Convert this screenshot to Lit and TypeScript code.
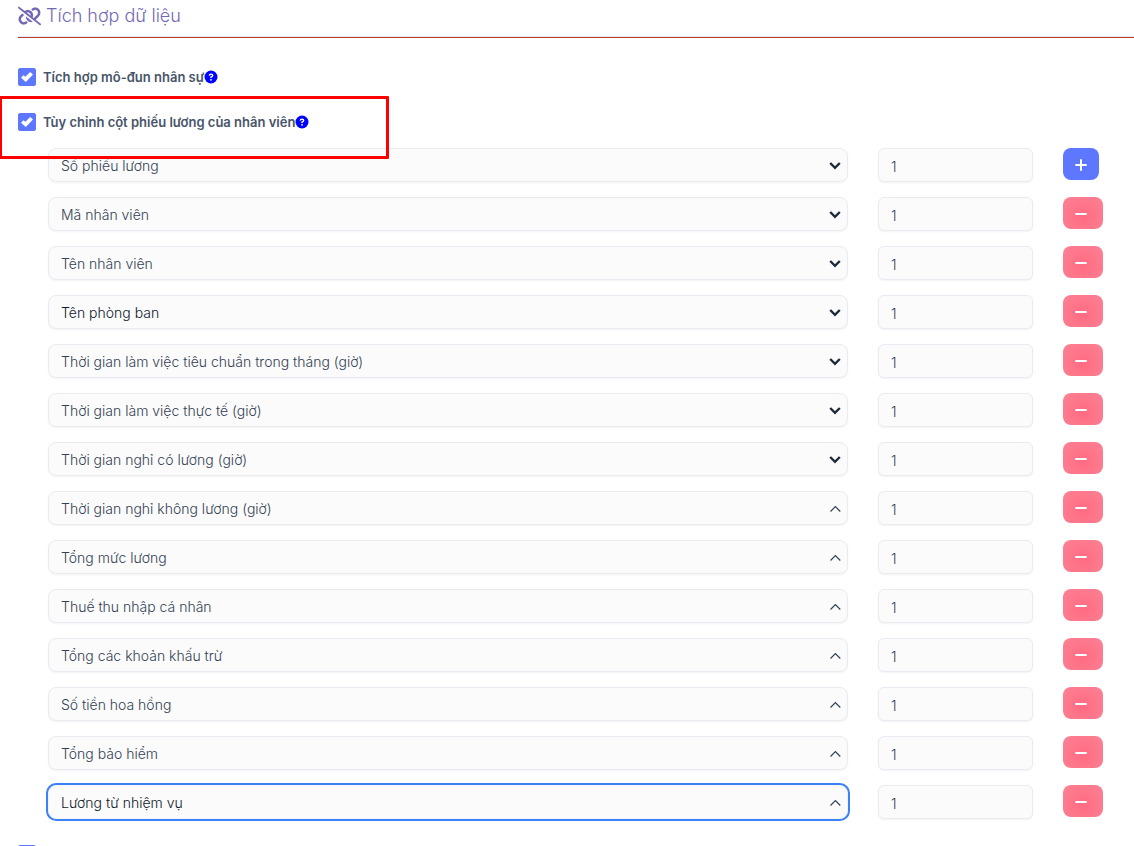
import { LitElement, html, css, svg } from "lit";
import { customElement, state } from "lit/decorators.js";

interface Column {
  name: string;
  order: number;
  chevron: "down" | "up";
  strong?: boolean;
}

const COLUMNS: Column[] = [
  { name: "Số phiếu lương", order: 1, chevron: "down" },
  { name: "Mã nhân viên", order: 1, chevron: "down" },
  { name: "Tên nhân viên", order: 1, chevron: "down" },
  { name: "Tên phòng ban", order: 1, chevron: "down", strong: true },
  { name: "Thời gian làm việc tiêu chuẩn trong tháng (giờ)", order: 1, chevron: "down" },
  { name: "Thời gian làm việc thực tế (giờ)", order: 1, chevron: "down" },
  { name: "Thời gian nghỉ có lương (giờ)", order: 1, chevron: "down" },
  { name: "Thời gian nghỉ không lương (giờ)", order: 1, chevron: "up" },
  { name: "Tổng mức lương", order: 1, chevron: "up" },
  { name: "Thuế thu nhập cá nhân", order: 1, chevron: "up" },
  { name: "Tổng các khoản khấu trừ", order: 1, chevron: "up" },
  { name: "Số tiền hoa hồng", order: 1, chevron: "up" },
  { name: "Tổng bảo hiểm", order: 1, chevron: "up" },
  { name: "Lương từ nhiệm vụ", order: 1, chevron: "up", strong: true },
];

@customElement("app-root")
export class AppRoot extends LitElement {
  @state() private active = COLUMNS.length - 1;

  static styles = css`
    :host {
      display: block;
      position: relative;
      height: 100vh;
      overflow: hidden;
      background: #fff;
      color: #475569;
      font-family: Inter, "Noto Sans", sans-serif;
      font-size: 14px;
      line-height: 20px;
    }
    *,
    *::before {
      box-sizing: border-box;
    }
    .page {
      padding-left: 18px;
    }
    .heading {
      display: flex;
      align-items: center;
      gap: 5px;
      height: 38px;
      margin: 0 0 30px;
      padding-bottom: 6px;
      border-bottom: 1px solid #c0392b;
      box-shadow: inset 0 -1px 0 #e8ecf2;
      color: #7367b5;
      font-size: 18px;
      font-weight: 300;
      line-height: 28px;
    }
    .heading svg {
      width: 23px;
      height: 20px;
      stroke: currentColor;
      stroke-width: 4;
    }
    .check {
      display: flex;
      align-items: center;
      height: 18px;
      margin-bottom: 27px;
      font-size: 13px;
      font-weight: 600;
    }
    .check label {
      padding-left: 7px;
    }
    .check input {
      appearance: none;
      display: grid;
      place-items: center;
      width: 18px;
      height: 18px;
      margin: 0;
      border: 1px solid #5d78ff;
      border-radius: 2px;
      background: #fff;
    }
    .check input:checked {
      background: #5d78ff;
    }
    .check input:checked::before {
      content: "";
      width: 12px;
      height: 10px;
      background: #fff;
      clip-path: polygon(0 58%, 20% 32%, 37% 48%, 76% 0, 100% 25%, 40% 100%);
    }
    .help {
      width: 14px;
      height: 14px;
    }
    .rows {
      display: grid;
      gap: 15px;
      margin: -10px 31px 0 30px;
    }
    .row {
      display: grid;
      grid-template-columns: 800fr 155fr 40px;
      column-gap: 30px;
      height: 34px;
    }
    .pick {
      display: grid;
      align-items: center;
    }
    .pick > * {
      grid-area: 1 / 1;
    }
    .pick svg {
      justify-self: end;
      width: 14px;
      height: 10px;
      margin-right: 6px;
      fill: none;
      pointer-events: none;
    }
    .field {
      width: 100%;
      height: 34px;
      margin: 0;
      padding: 2px 12px 0;
      border: 1px solid #e8ecf2;
      border-radius: 6px;
      background: #fbfbfb;
      box-shadow: 0 1px 2px rgba(0, 0, 0, 0.05);
      color: #334155;
      font: inherit;
      font-weight: 300;
      appearance: none;
      outline: none;
    }
    select.field {
      border-radius: 8px;
    }
    .field.strong {
      color: #0f172a;
    }
    .field.active {
      box-shadow: 0 0 0 2px #3b82f6;
      border-color: #f1f5f9;
    }
    .btn {
      display: grid;
      place-items: center;
      height: 32px;
      padding: 2px 0 0;
      border: 0;
      border-radius: 8px;
    }
    .add {
      width: 36px;
      background: #5d78ff;
    }
    .remove {
      width: 40px;
      padding-right: 4px;
      background: radial-gradient(circle at 50% 60%, #ff6b82, #fd8294);
    }
    .btn svg {
      width: 12px;
      height: 12px;
      stroke: #fff;
      stroke-width: 2;
      stroke-linecap: round;
    }
    .next {
      margin-top: 26px;
    }
    .callout {
      position: absolute;
      top: 96px;
      left: -1px;
      width: 390px;
      height: 63px;
      border: 3px solid #f00;
      border-radius: 1px;
      pointer-events: none;
    }
  `;

  private help() {
    return html`<svg class="help" viewBox="0 0 14 14" aria-hidden="true">
      <circle cx="7" cy="7" r="6.5" fill="#00f" />
      <path d="M5.3 5.6Q5.4 4.1 7 4.1Q8.7 4.1 8.7 5.5Q8.7 6.4 7 7.1V7.9" fill="none" stroke="#fff" stroke-width="1.4" />
      <circle cx="7" cy="9.8" r=".9" fill="#fff" />
    </svg>`;
  }

  private row(column: Column, index: number) {
    const chevron =
      column.chevron === "down"
        ? svg`<path d="M2.2 3l4.8 4.8L11.8 3" stroke="#1e293b" stroke-width="2.4" />`
        : svg`<path d="M2.5 8.5l4.9-4.9 4.9 4.9" stroke="#334155" stroke-width="1.2" />`;
    return html`<div class="row">
      <div class="pick">
        <select
          class="field ${column.strong ? "strong" : ""} ${index === this.active ? "active" : ""}"
          aria-label="Cột phiếu lương ${index + 1}"
          @focus=${() => (this.active = index)}
        >
          ${COLUMNS.map((c) => html`<option ?selected=${c === column}>${c.name}</option>`)}
        </select>
        <svg viewBox="0 0 14 10" aria-hidden="true">${chevron}</svg>
      </div>
      <input class="field" type="text" inputmode="numeric" aria-label="Thứ tự ${index + 1}" .value=${String(column.order)} />
      ${index === 0
        ? html`<button class="btn add" type="button" aria-label="Thêm">
            <svg viewBox="0 0 12 12"><path d="M1 6H11M6 1V11" /></svg>
          </button>`
        : html`<button class="btn remove" type="button" aria-label="Xóa">
            <svg viewBox="0 0 12 12"><path d="M1 6H11" /></svg>
          </button>`}
    </div>`;
  }

  render() {
    return html`<main class="page">
        <h2 class="heading">
          <svg viewBox="0 0 640 512" fill="currentColor" aria-hidden="true">
            <path
              d="M38.8 5.1C28.4-3.1 13.3-1.2 5.1 9.2S-1.2 34.7 9.2 42.9l592 464c10.4 8.2 25.5 6.3 33.7-4.1s6.3-25.5-4.1-33.7L489.3 358.2l90.5-90.5c56.5-56.5 56.5-148 0-204.5c-50-50-128.8-56.5-186.3-15.4l-1.6 1.1c-14.4 10.3-17.7 30.3-7.4 44.6s30.3 17.7 44.6 7.4l1.6-1.1c32.1-22.9 76-19.3 103.8 8.6c31.5 31.5 31.5 82.5 0 114l-96 96-31.9-25C430.9 239.6 420.1 175.1 377 132c-52.2-52.3-134.5-56.2-191.3-11.7L38.8 5.1zM239 162c30.1-14.9 67.7-9.9 92.8 15.3c20 20 27.5 48.3 21.7 74.5L239 162zM406.6 416.4L220.9 270c-2.1 39.8 12.2 80.1 42.2 110c38.9 38.9 94.4 51 143.6 36.3zm-290-228.5L60.2 244.3c-56.5 56.5-56.5 148 0 204.5c50 50 128.8 56.5 186.3 15.4l1.6-1.1c14.4-10.3 17.7-30.3 7.4-44.6s-30.3-17.7-44.6-7.4l-1.6 1.1c-32.1 22.9-76 19.3-103.8-8.6C74 372 74 321 105.5 289.5l61.8-61.8-50.6-39.9z"
            />
          </svg>
          Tích hợp dữ liệu
        </h2>
        <div class="check">
          <input id="hr" type="checkbox" checked />
          <label for="hr">Tích hợp mô-đun nhân sự</label>${this.help()}
        </div>
        <div class="check">
          <input id="columns" type="checkbox" checked />
          <label for="columns">Tùy chỉnh cột phiếu lương của nhân viên</label>${this.help()}
        </div>
        <div class="rows">${COLUMNS.map((c, i) => this.row(c, i))}</div>
        <div class="check next">
          <input type="checkbox" aria-label="Tùy chọn tiếp theo" />
        </div>
      </main>
      <div class="callout"></div>`;
  }
}
